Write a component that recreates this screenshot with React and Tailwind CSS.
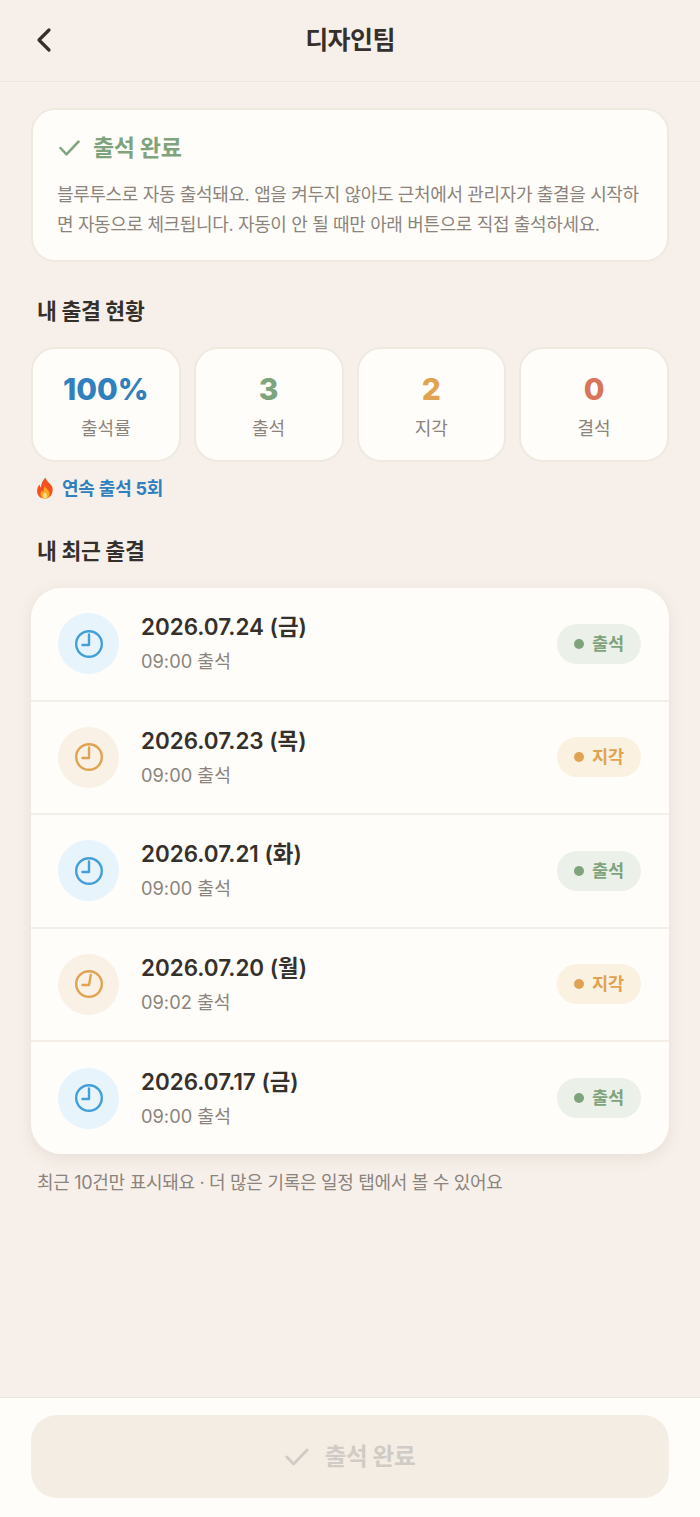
import React from 'react';

const fontStack = { fontFamily: 'Inter, "Noto Sans CJK KR", sans-serif' };

const records = [
  { date: '2026.07.24 (금)', time: '09:00 출석', status: 'ok' },
  { date: '2026.07.23 (목)', time: '09:00 출석', status: 'late' },
  { date: '2026.07.21 (화)', time: '09:00 출석', status: 'ok' },
  { date: '2026.07.20 (월)', time: '09:02 출석', status: 'late', tilt: true },
  { date: '2026.07.17 (금)', time: '09:00 출석', status: 'ok' },
];

const stats = [
  { value: '100%', label: '출석률', color: 'text-[#2f80bd]' },
  { value: '3', label: '출석', color: 'text-[#7fa37c]' },
  { value: '2', label: '지각', color: 'text-[#e0a352]' },
  { value: '0', label: '결석', color: 'text-[#d9745c]' },
];

const Check = ({ className }) => (
  <svg className={className} viewBox="0 0 21 16" fill="none" stroke="currentColor" strokeWidth="2.5" strokeLinecap="round" strokeLinejoin="round">
    <path d="M1.500 8L7.500 14.300L19.500 1.700" />
  </svg>
);

// the minute hand leans a little when the time is not on the hour
const Clock = ({ className, tilt }) => (
  <svg className={className} viewBox="0 0 28 28" fill="none" stroke="currentColor" strokeWidth="2.400" strokeLinecap="round" strokeLinejoin="round">
    <circle cx="14" cy="14" r="12.800" />
    <path d={tilt ? 'M15.800 5L14 15H7.500' : 'M14 4.500V15H7.500'} />
  </svg>
);

const Flame = () => (
  <svg className="w-[18px] h-[22px]" viewBox="0 0 18 22">
    <path fill="#f4511e" d="M9.500 0.500c0.500 3.500 4 5 6.500 9 2 4.500-0.500 12-7 12S0 16.500 1.500 11c0.500-1.500 1.200-2.500 2.200-3.500 0 1.500 0.500 2.500 1.500 3C4.800 7 7 3 9.500 0.500z" />
    <path fill="#ffa726" d="M9 9c0.500 2.500 4.500 4 4.500 8 0 3-2 4.500-4.500 4.500S4.500 20 4.500 17c0-2 1-3 2-3.800 0 1 0.500 1.500 1 1.800C7.200 13 7.800 11 9 9z" />
    <path fill="#ffe082" d="M9 15c0.500 1.200 2 2.200 2 4 0 1.500-1 2.500-2 2.500s-2-1-2-2.500c0-1.800 1.500-2.800 2-4z" />
  </svg>
);

const Row = ({ date, time, status, tilt, last }) => {
  const late = status === 'late';
  return (
    <div className={`flex items-center pl-[27px] pr-[28px] ${last ? 'h-[112px]' : 'h-[113.500px] border-b-2 border-[#f3eee7]'}`}>
      <div className={`w-[61px] h-[61px] rounded-full flex items-center justify-center shrink-0 ${late ? 'bg-[#f9f1e5]' : 'bg-[#e8f4fc]'}`}>
        <Clock tilt={tilt} className={`w-[28px] h-[28px] ${late ? 'text-[#e0a352]' : 'text-[#449fd8]'}`} />
      </div>
      <div className="ml-[22px] flex-1 -mt-[1px]">
        <div className="text-[22.400px] leading-[30px] font-semibold text-[#35302c]">{date}</div>
        <div className="mt-[6px] text-[18.300px] leading-[26px] text-[#8a847d]">{time}</div>
      </div>
      <div className={`flex items-center h-[40px] w-[84px] rounded-full pl-[17px] ${late ? 'bg-[#fbf1e1] text-[#e0a352]' : 'bg-[#ebf1e9] text-[#7fa37c]'}`}>
        <span className={`w-[10px] h-[10px] rounded-full ${late ? 'bg-[#e0a352]' : 'bg-[#7fa37c]'}`} />
        <span className="ml-[8px] text-[17.500px] font-semibold">{late ? '지각' : '출석'}</span>
      </div>
    </div>
  );
};

export default function App() {
  return (
    <div style={fontStack} className="w-[700px] h-[1517px] flex flex-col bg-[#f7f0ea] overflow-hidden">
      <header className="relative h-[82px] shrink-0 flex items-center justify-center border-b border-[#ebe5de]">
        <svg className="absolute left-[32px] top-[24px] w-[26px] h-[32px] text-[#35302c]" viewBox="0 0 26 32" fill="none" stroke="currentColor" strokeWidth="3.200" strokeLinecap="round" strokeLinejoin="round">
          <path d="M17 6L7 16l10 10" />
        </svg>
        <h1 className="text-[25px] font-bold tracking-[-0.6px] text-[#35302c]">디자인팀</h1>
      </header>

      <main className="flex-1 px-[31px] pt-[26px]">
        <section className="h-[154px] rounded-[24px] bg-[#fffdf9] border-2 border-[#efe9e0] pl-[26px] pr-[20px] pt-[20px]">
          <div className="flex items-center text-[#7fa37c]">
            <Check className="w-[21px] h-[16px]" />
            <span className="ml-[13px] text-[23px] leading-[36px] font-bold tracking-[-0.3px]">출석 완료</span>
          </div>
          <p className="mt-[14px] -ml-[2px] text-[18px] leading-[30px] tracking-[-0.36px] whitespace-nowrap text-[#8a847d]">
            블루투스로 자동 출석돼요. 앱을 켜두지 않아도 근처에서 관리자가 출결을 시작하
            <br />
            면 자동으로 체크됩니다. 자동이 안 될 때만 아래 버튼으로 직접 출석하세요.
          </p>
        </section>

        <h2 className="mt-[33px] ml-[6px] text-[21.600px] leading-[32px] font-bold tracking-[-0.3px] text-[#35302c]">내 출결 현황</h2>

        <div className="mt-[20px] grid grid-cols-4 gap-[13px]">
          {stats.map((s) => (
            <div key={s.label} className="h-[115px] rounded-[24px] bg-[#fffdf9] border-2 border-[#efe9e0] flex flex-col items-center pt-[21px]">
              <div className={`text-[30px] leading-[38px] font-extrabold ${s.color}`}>{s.value}</div>
              <div className="mt-[8px] text-[18px] leading-[26px] text-[#8a847d]">{s.label}</div>
            </div>
          ))}
        </div>

        <div className="mt-[13px] ml-[5px] flex items-center h-[26px]">
          <Flame />
          <span className="ml-[8px] text-[18px] font-bold tracking-[-0.2px] text-[#2f80bd]">연속 출석 5회</span>
        </div>

        <h2 className="mt-[34px] ml-[6px] text-[21.600px] leading-[32px] font-bold tracking-[-0.3px] text-[#35302c]">내 최근 출결</h2>

        <div className="mt-[21px] rounded-[30px] bg-[#fffdf9] shadow-[0_4px_16px_rgba(90,70,40,0.1)]">
          {records.map((r, i) => (
            <Row key={r.date} {...r} last={i === records.length - 1} />
          ))}
        </div>

        <p className="mt-[15px] ml-[6px] text-[18px] leading-[28px] tracking-[-0.3px] text-[#8a847d]">
          최근 10건만 표시돼요 · 더 많은 기록은 일정 탭에서 볼 수 있어요
        </p>
      </main>

      <footer className="h-[120px] shrink-0 bg-[#fffdf9] border-t border-[#ebe5de] px-[31px] pt-[17px]">
        <div className="h-[83px] rounded-[26px] bg-[#f3ede4] flex items-center justify-center text-[#d0cbc4]">
          <Check className="w-[24px] h-[18px]" />
          <span className="ml-[16px] text-[23.500px] font-bold tracking-[-0.3px]">출석 완료</span>
        </div>
      </footer>
    </div>
  );
}
